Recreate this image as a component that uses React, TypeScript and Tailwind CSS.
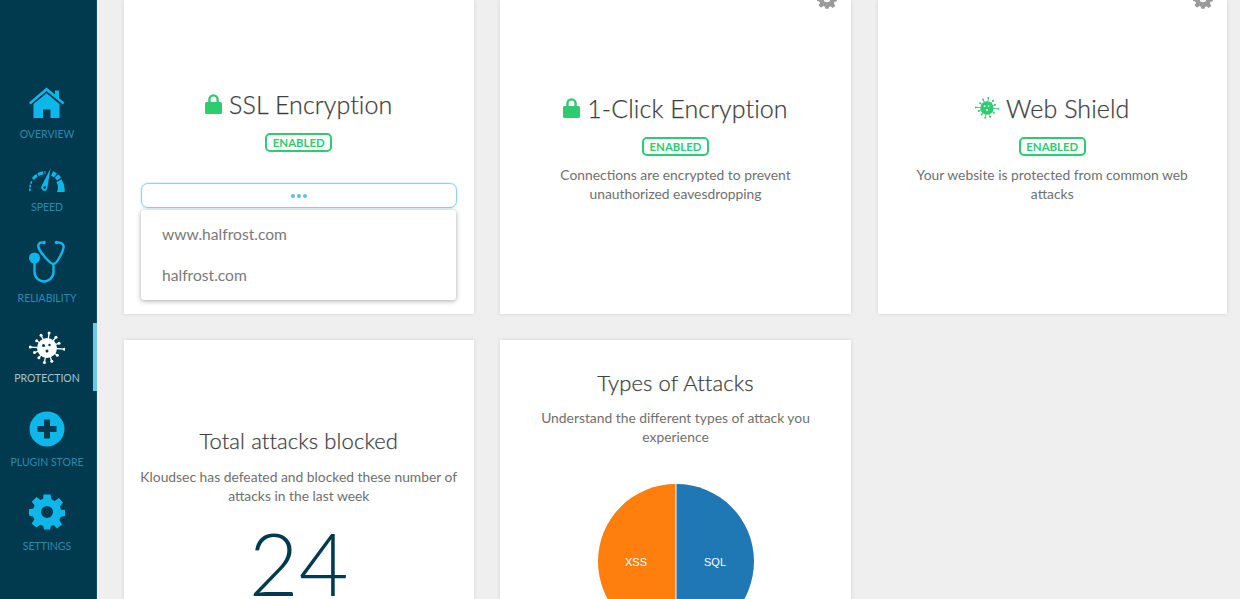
const lato = { fontFamily: "Lato, sans-serif" }

function HomeIcon() {
  return (
    <svg width="36" height="32" viewBox="0 0 36 32" fill="#0db7ea">
      <path d="M0 15.5 L17.5 0.5 L26 7.5 V3.5 H30 V11 L35.5 15.5 L34 17.5 L17.5 4 L1.5 17.5 Z" />
      <path fillRule="evenodd" d="M4.5 17 L17.5 6.2 L30.5 17 V31 H21.5 V22.5 H14 V31 H4.5 Z" />
    </svg>
  )
}

function SpeedIcon() {
  return (
    <svg width="36" height="24" viewBox="0 0 36 24" fill="none">
      <path d="M1 23 A17 17 0 0 1 3 13" stroke="#0db7ea" strokeWidth="1.6" strokeDasharray="2.5 1.2" />
      <path d="M4 11 A17 17 0 0 1 16.5 4.5" stroke="#0db7ea" strokeWidth="3" strokeDasharray="5.5 1.2" />
      <path d="M23 5.5 A15 15 0 0 1 30 11" stroke="#0db7ea" strokeWidth="5" strokeDasharray="4 1.2" />
      <path d="M27.5 14 L32.5 11.5 A17 17 0 0 1 35.5 24 H28 A12 12 0 0 0 27.5 14 Z" fill="#0db7ea" />
      <path d="M21.5 0.5 L18.5 19 A3.2 3.2 0 1 1 12.8 17.6 Z" fill="#0db7ea" />
      <circle cx="15.6" cy="19.6" r="1.3" fill="#013a4f" />
    </svg>
  )
}

function StethoscopeIcon() {
  return (
    <svg width="36" height="44" viewBox="0 0 36 44" fill="none" stroke="#0db7ea" strokeWidth="2.4" strokeLinecap="round">
      <circle cx="5.5" cy="18" r="5.5" fill="#0db7ea" stroke="none" />
      <path d="M5.5 23 V32 A9.5 9.5 0 0 0 24.5 32 V24" />
      <path d="M13 2.5 C9.5 2.5 9 5 9.5 7.5 C11 12 21 24 24.5 24 C28 24 33.5 12 34.5 8 C35 5 33.5 2.5 29 2.5" strokeLinejoin="round" />
      <circle cx="15" cy="2.5" r="1.8" fill="#0db7ea" stroke="none" />
      <circle cx="27.5" cy="2.5" r="1.8" fill="#0db7ea" stroke="none" />
    </svg>
  )
}

// little germ, used in the sidebar (white) and on the Web Shield card (green)
function VirusIcon({ size, color, face }: { size: number; color: string; face: string }) {
  const spikes = [
    [4, 1.0], [35, 0.72], [70, 0.8], [100, 0.84], [130, 0.72], [160, 0.76],
    [183, 0.96], [215, 0.72], [245, 0.8], [278, 0.86], [310, 0.8], [338, 0.74],
  ]
  return (
    <svg width={size} height={size} viewBox="0 0 36 36">
      {spikes.map(([a, l]) => {
        const r = (a * Math.PI) / 180
        const x = 18 + Math.cos(r) * 17.5 * l
        const y = 18 + Math.sin(r) * 17.5 * l
        return (
          <g key={a}>
            <line x1="18" y1="18" x2={x} y2={y} stroke={color} strokeWidth="1.3" />
            <circle cx={x} cy={y} r="1.5" fill={color} />
          </g>
        )
      })}
      <circle cx="18" cy="18" r="10" fill={color} />
      <circle cx="14.5" cy="15.5" r="1.5" fill={face} />
      <circle cx="20.5" cy="15" r="1.2" fill={face} />
      <circle cx="18" cy="21" r="1.5" fill={face} />
    </svg>
  )
}

function PlusIcon() {
  return (
    <svg width="36" height="36" viewBox="0 0 36 36">
      <circle cx="18" cy="18" r="17.5" fill="#0db7ea" />
      <path d="M15 8.5 H21 V15 H27.5 V21 H21 V27.5 H15 V21 H8.5 V15 H15 Z" fill="#013a4f" />
    </svg>
  )
}

function GearIcon({ size, color }: { size: number; color: string }) {
  return (
    <svg width={size} height={size} viewBox="0 0 36 36">
      <path
        fillRule="evenodd"
        fill={color}
        d="M14.5 0.5 H21.5 L22.6 5.6 L25.6 6.9 L30 4 L34 8.8 L30.8 12.6 L32 15.6 L36 16 V22 L31.6 23 L30.4 26 L33 30.4 L28 34.4 L24.6 31 L21.6 32.2 L21 35.6 H15 L14.2 32 L11.2 30.8 L7.4 33.6 L2.6 29.4 L5.4 25.4 L4 22.4 L0 21.6 V15.2 L4.4 14.4 L5.6 11.4 L2.8 7.4 L7.6 3 L11.4 6 L14.2 4.8 Z M18 12 A6 6 0 1 0 18 24 A6 6 0 1 0 18 12 Z"
      />
    </svg>
  )
}

function LockIcon() {
  return (
    <svg width="17" height="20" viewBox="0 0 17 20" fill="#2ecc71">
      <path fillRule="evenodd" d="M3.2 8 V5.5 A5.3 5.3 0 0 1 13.8 5.5 V8 H15.5 A1.5 1.5 0 0 1 17 9.5 V18.5 A1.5 1.5 0 0 1 15.5 20 H1.5 A1.5 1.5 0 0 1 0 18.5 V9.5 A1.5 1.5 0 0 1 1.5 8 Z M5.6 8 H11.4 V5.5 A2.9 2.9 0 0 0 5.6 5.5 Z" />
    </svg>
  )
}

function NavItem({ icon, label, active, pt, iconH, gap }: { icon: React.ReactNode; label: string; active?: boolean; pt: string; iconH: string; gap: string }) {
  return (
    <div className={`relative flex flex-col items-center pr-[3px] ${pt}`}>
      <div className={`flex items-center justify-center ${iconH}`}>{icon}</div>
      <span className={`${gap} text-[10.5px] leading-[14px] uppercase ${active ? "text-[#a9c3ce]" : "text-[#2a8aad]"}`}>{label}</span>
      {active && <div className="absolute right-0 bottom-[-6px] h-[68px] w-[4px] bg-[#6fc8e4]" />}
    </div>
  )
}

function Badge() {
  return (
    <span className="inline-block rounded-[5px] border-2 border-[#2ecc71] px-[5.5px] text-[11.4px] font-bold leading-[15px] text-[#2ecc71]">
      ENABLED
    </span>
  )
}

function Title({ children, icon }: { children: React.ReactNode; icon?: React.ReactNode }) {
  return (
    <h2 className="flex items-center justify-center gap-[7px] text-[25px] font-light leading-[32px] tracking-[0.1px] text-[#3a3a3a] [-webkit-text-stroke:0.25px_#4a4a4a]">
      {icon}
      {children}
    </h2>
  )
}

function FeatureCard({ icon, title, text }: { icon: React.ReactNode; title: string; text: string }) {
  return (
    <div className="relative flex h-[314px] flex-col items-center bg-white px-[30px] pt-[92px] text-center shadow-[0_0_4px_rgba(0,0,0,0.12)]">
      <div className="absolute right-[14px] top-[-11px]">
        <GearIcon size={20} color="#9b9b9b" />
      </div>
      <Title icon={icon}>{title}</Title>
      <div className="mt-[13px] flex">
        <Badge />
      </div>
      <p className="mt-[9px] text-[13.85px] leading-[19px] text-[#707070]">{text}</p>
    </div>
  )
}

export default function App() {
  return (
    <div className="flex h-[599px] w-[1240px] overflow-hidden bg-[#efefef]" style={lato}>
      <aside className="w-[97px] shrink-0 bg-[#013a4f] shadow-[inset_-1px_0_0_#0e5069]">
        <NavItem pt="pt-[86px]" iconH="h-[34px]" gap="mt-[7px]" icon={<HomeIcon />} label="Overview" />
        <NavItem pt="pt-[26px]" iconH="h-[26px]" gap="mt-[7px]" icon={<SpeedIcon />} label="Speed" />
        <NavItem pt="pt-[26px]" iconH="h-[44px]" gap="mt-[7px]" icon={<StethoscopeIcon />} label="Reliability" />
        <NavItem pt="pt-[25px]" iconH="h-[36px]" gap="mt-[5px]" active icon={<VirusIcon size={36} color="#ffffff" face="#013a4f" />} label="Protection" />
        <NavItem pt="pt-[26px]" iconH="h-[36px]" gap="mt-[8px]" icon={<PlusIcon />} label="Plugin Store" />
        <NavItem pt="pt-[25px]" iconH="h-[36px]" gap="mt-[9px]" icon={<GearIcon size={36} color="#0db7ea" />} label="Settings" />
      </aside>

      <main className="grid h-fit flex-1 grid-cols-[349.5px_351px_349.5px] gap-x-[26.5px] gap-y-[26px] pl-[27px]">
        {/* SSL card, dropdown is open */}
        <div className="flex h-[314px] flex-col items-center bg-white px-[17px] pt-[88px] shadow-[0_0_4px_rgba(0,0,0,0.12)]">
          <Title icon={<LockIcon />}>SSL Encryption</Title>
          <div className="mt-[13px] flex">
            <Badge />
          </div>
          <div className="mt-[31px] flex h-[25px] w-[316px] shrink-0 items-center justify-center gap-[2px] rounded-[7px] border border-[#8fd3ea] shadow-[0_0_2px_rgba(111,200,228,0.7)]">
            <span className="h-[4px] w-[4px] rounded-full bg-[#5fc0e0]" />
            <span className="h-[4px] w-[4px] rounded-full bg-[#5fc0e0]" />
            <span className="h-[4px] w-[4px] rounded-full bg-[#5fc0e0]" />
          </div>
          <div className="mt-[2px] w-[315px] self-start rounded-[3px] bg-white py-[4px] pl-[21px] text-[15.6px] leading-[41px] text-[#7a7a7a] shadow-[0_1px_5px_rgba(0,0,0,0.35)]">
            <div>www.halfrost.com</div>
            <div>halfrost.com</div>
          </div>
        </div>

        <FeatureCard
          icon={<LockIcon />}
          title="1-Click Encryption"
          text="Connections are encrypted to prevent unauthorized eavesdropping"
        />
        <FeatureCard
          icon={<VirusIcon size={24} color="#2ecc71" face="#ffffff" />}
          title="Web Shield"
          text="Your website is protected from common web attacks"
        />

        <div className="flex h-[300px] flex-col items-center bg-white px-[10px] pt-[87px] text-center shadow-[0_0_4px_rgba(0,0,0,0.12)]">
          <h2 className="text-[22px] font-light leading-[28px] tracking-[0.1px] text-[#3a3a3a] [-webkit-text-stroke:0.25px_#4a4a4a]">Total attacks blocked</h2>
          <p className="mt-[12px] text-[13.85px] leading-[19px] text-[#707070]">
            Kloudsec has defeated and blocked these number of attacks in the last week
          </p>
          <div className="mt-[26px] h-[64px] text-[86px] font-light leading-[64px] text-[#013a4f]">24</div>
        </div>

        <div className="flex h-[300px] flex-col items-center overflow-hidden bg-white px-[30px] pt-[29px] text-center shadow-[0_0_4px_rgba(0,0,0,0.12)]">
          <h2 className="text-[22px] font-light leading-[28px] tracking-[0.1px] text-[#3a3a3a] [-webkit-text-stroke:0.25px_#4a4a4a]">Types of Attacks</h2>
          <p className="mt-[11px] text-[13.85px] leading-[19px] text-[#707070]">
            Understand the different types of attack you experience
          </p>
          <svg className="mt-[37px] shrink-0" width="158" height="158" viewBox="0 0 158 158">
            <path d="M78.5 1 A77.5 77.5 0 0 0 78.5 156 Z" fill="#ff7f0e" />
            <path d="M79.5 1 A77.5 77.5 0 0 1 79.5 156 Z" fill="#1f77b4" />
            <text x="39" y="83" textAnchor="middle" fontSize="11" fill="#ffffff" fontFamily="Liberation Sans, sans-serif">XSS</text>
            <text x="118" y="83" textAnchor="middle" fontSize="11" fill="#ffffff" fontFamily="Liberation Sans, sans-serif">SQL</text>
          </svg>
        </div>
      </main>
    </div>
  )
}
